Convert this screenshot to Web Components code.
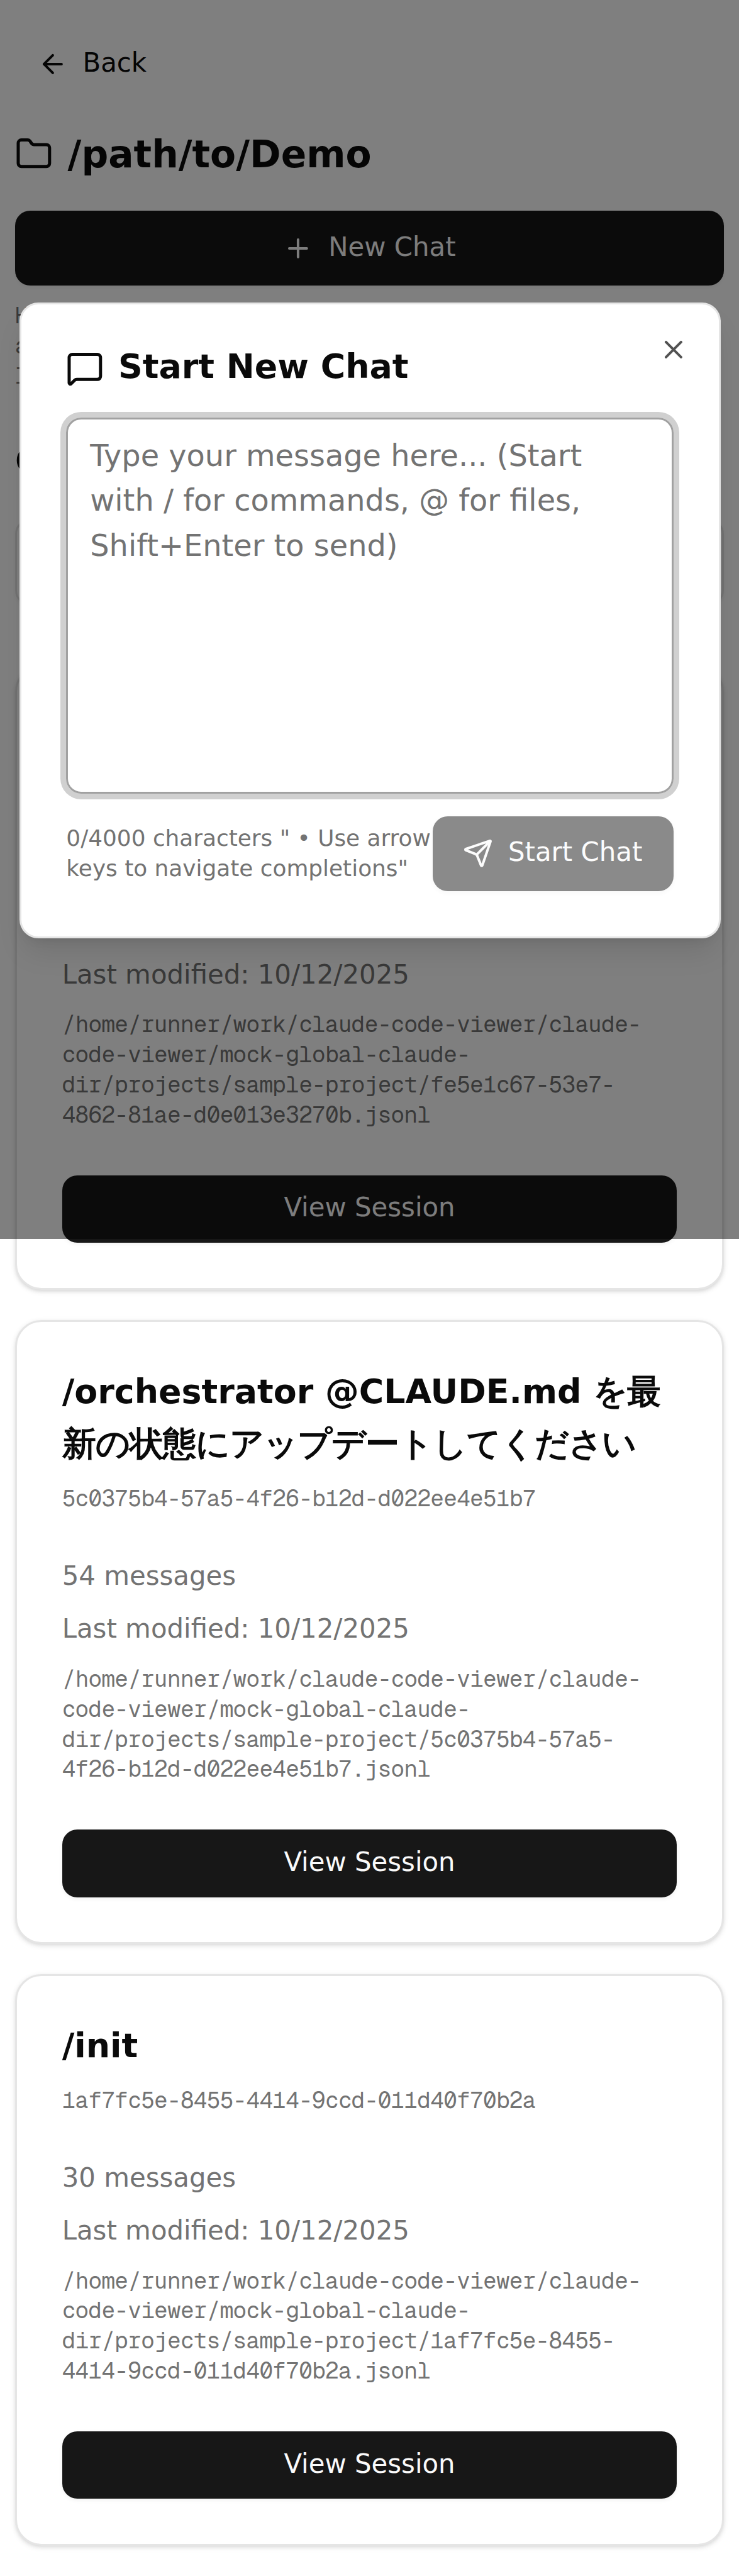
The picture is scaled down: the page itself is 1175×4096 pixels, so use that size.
<!DOCTYPE html>
<html lang="en">
<head>
<meta charset="utf-8">
<title>Claude Code Viewer</title>
<style>
/* 1rem is one layout unit of the 393-unit wide mobile viewport */
html { font-size: calc(1175px / 393); }
body {
  margin: 0; background: #fff; color: #0a0a0a; overflow: hidden;
  font-family: "DejaVu Sans", sans-serif;
  --mono: "Geist Mono", "Roboto Mono", "Liberation Mono", monospace;
  --muted: #737373; --border: #e5e5e5; --primary: #171717;
}
</style>
</head>
<body>
<project-page></project-page>
<script>
const define = (name, html) => {
  const t = document.createElement('template');
  t.innerHTML = html;
  customElements.define(name, class extends HTMLElement {
    constructor() {
      super();
      this.attachShadow({ mode: 'open' }).append(t.content.cloneNode(true));
    }
  });
};

const icons = {
  back: '<path d="m12 19-7-7 7-7"/><path d="M19 12H5"/>',
  folder: '<path d="M20 20a2 2 0 0 0 2-2V8a2 2 0 0 0-2-2h-7.9a2 2 0 0 1-1.69-.9L9.6 3.9A2 2 0 0 0 7.93 3H4a2 2 0 0 0-2 2v13a2 2 0 0 0 2 2Z"/>',
  plus: '<path d="M5 12h14"/><path d="M12 5v14"/>',
  close: '<path d="M18 6 6 18"/><path d="m6 6 12 12"/>',
  message: '<path d="M22 17a2 2 0 0 1-2 2H6.828a2 2 0 0 0-1.414.586l-2.202 2.202A.71.71 0 0 1 2 21.286V5a2 2 0 0 1 2-2h16a2 2 0 0 1 2 2z"/>',
  send: '<path d="M14.536 21.686a.5.5 0 0 0 .937-.024l6.5-19a.496.496 0 0 0-.635-.635l-19 6.5a.5.5 0 0 0-.024.937l7.93 3.18a2 2 0 0 1 1.112 1.11z"/><path d="m21.854 2.147-10.94 10.939"/>'
};
customElements.define('ui-icon', class extends HTMLElement {
  constructor() { super(); this.attachShadow({ mode: 'open' }); }
  connectedCallback() {
    this.shadowRoot.innerHTML = `<style>
      :host { display: block; flex: none; width: 16rem; height: 16rem; }
      :host([large]) { width: 20rem; height: 20rem; }
      svg { display: block; width: 100%; height: 100%; }
    </style><svg viewBox="0 0 24 24" fill="none" stroke="currentColor" stroke-width="2" stroke-linecap="round" stroke-linejoin="round">${icons[this.getAttribute('name')]}</svg>`;
  }
});

define('ui-button', `<style>
  :host { display: flex; align-items: center; justify-content: center; gap: 8rem; box-sizing: border-box;
    height: 36rem; padding: 0 16rem; border-radius: 8rem; background: var(--primary); color: #fafafa;
    font-size: 14rem; line-height: 20rem; white-space: nowrap; box-shadow: 0 1rem 2rem rgba(0,0,0,.05); }
  :host([tall]) { height: 40rem; }
  :host([disabled]) { opacity: .5; }
  :host([ghost]) { background: none; color: inherit; box-shadow: none; padding: 0 12rem; align-self: flex-start; }
  span { padding-bottom: 4px; }
</style><slot name="icon"></slot><span><slot></slot></span>`);

define('session-card', `<style>
  :host { display: flex; flex-direction: column; justify-content: flex-end; gap: 24rem; box-sizing: border-box;
    height: var(--h, auto); padding: calc(25rem - 3px) 24rem; border: 3px solid var(--border); border-radius: 14rem;
    background: #fff; box-shadow: 0 1rem 3rem rgba(0,0,0,.1), 0 1rem 2rem -1rem rgba(0,0,0,.1); }
  header { display: flex; flex-direction: column; gap: 6rem; }
  h3 { margin: -3px 0 3px; font-size: 18rem; line-height: 28rem; font-weight: bold; word-break: break-all; }
  h3 span { letter-spacing: -.36rem; }
  .id, .path { font-family: var(--mono); font-size: 12rem; line-height: 16rem; letter-spacing: -.2rem; color: var(--muted); }
  .body { display: flex; flex-direction: column; gap: 8rem; color: var(--muted); }
  .line { margin: -2px 0 2px; font-size: 14rem; line-height: 20rem; }
</style>
<header><h3></h3><div class="id"></div></header>
<div class="body"><div class="line count"></div><div class="line date"></div><div class="path"></div></div>
<ui-button>View Session</ui-button>`);
customElements.define('session-item', class extends HTMLElement {
  constructor() { super(); this.attachShadow({ mode: 'open' }); }
  connectedCallback() {
    this.shadowRoot.innerHTML = '<style>:host { display: block; }</style><session-card></session-card>';
    const card = this.shadowRoot.lastChild, root = card.shadowRoot;
    const { heading, count, uuid, height } = this.dataset;
    if (height) card.style.setProperty('--h', height);
    if (heading) {
      // Japanese runs are tracked slightly tighter than Latin ones
      root.querySelector('h3').innerHTML = heading.replace(/[\u3000-\u9fff]+/g, '<span>$&</span>');
      root.querySelector('.id').textContent = uuid;
      root.querySelector('.count').textContent = count + ' messages';
    } else {
      root.querySelector('header').remove();
      root.querySelector('.count').remove();
    }
    root.querySelector('.date').textContent = 'Last modified: 10/12/2025';
    root.querySelector('.path').textContent = '/home/runner/work/claude-code-viewer/claude-code-viewer/mock-global-claude-dir/projects/sample-project/' + uuid + '.jsonl';
  }
});

define('chat-dialog', `<style>
  :host { display: block; box-sizing: border-box; position: relative; width: 1115.3px; height: 338rem; padding: 24rem;
    border: 3px solid var(--border); border-radius: 10rem; background: #fff;
    box-shadow: 0 10rem 15rem -3rem rgba(0,0,0,.1), 0 4rem 6rem -4rem rgba(0,0,0,.1); }
  .close { position: absolute; right: 16rem; top: 16rem; opacity: .7; }
  .content { display: flex; flex-direction: column; }
  h2 { display: flex; align-items: center; gap: 8rem; height: 20rem; margin: 0 0 16rem; font-size: 18rem; line-height: 18rem; font-weight: bold; }
  h2 span { padding-bottom: 7px; margin-left: -1px; }
  .input { box-sizing: border-box; height: 200rem; padding: calc(8rem - 2px) 12rem 0 calc(12rem - 1px); border: 3px solid #a1a1a1; border-radius: 8rem;
    font-size: 16rem; line-height: 24rem; color: var(--muted); box-shadow: 0 0 0 3rem #d0d0d0; }
  footer { display: flex; align-items: center; justify-content: space-between; margin-top: 12rem; }
  footer ui-button { width: 128rem; justify-content: flex-start; }
  p { margin: 0; font-size: 12rem; line-height: 16rem; color: var(--muted); }
</style>
<ui-icon class="close" name="close"></ui-icon>
<div class="content">
  <h2><ui-icon large name="message"></ui-icon><span>Start New Chat</span></h2>
  <div class="input">Type your message here... (Start with / for commands, @ for files, Shift+Enter to send)</div>
  <footer><p>0/4000 characters " • Use arrow<br>keys to navigate completions"</p>
  <ui-button tall disabled><ui-icon slot="icon" name="send"></ui-icon>Start Chat</ui-button></footer>
</div>`);

define('modal-overlay', `<style>
  :host { display: flex; align-items: flex-start; position: absolute; left: 0; top: 0; box-sizing: border-box;
    width: 1175px; height: 659rem; padding: 161rem 0 0 30.6px; background: rgba(0,0,0,.5); }
</style><slot></slot>`);

define('project-page', `<style>
  :host { display: block; box-sizing: border-box; height: 4096px; padding: 16rem 8rem; }
  .top { display: flex; flex-direction: column; }
  h1 { display: flex; align-items: center; gap: 8rem; height: 28rem; margin: 16rem 0; font-size: 20rem; line-height: 28rem; font-weight: bold; }
  h1 span { padding-top: 2px; }
  .file { margin: 8rem 0 0; font-family: var(--mono); font-size: 12rem; line-height: 16rem; letter-spacing: -.2rem; color: var(--muted); word-break: break-all; }
  h2 { margin: calc(24rem - 3px) 0 calc(16rem + 3px); font-size: 18rem; line-height: 28rem; font-weight: bold; }
  .filter { box-sizing: border-box; height: 46rem; margin-bottom: 32rem; border: 3px solid var(--border); border-radius: 8rem; box-shadow: 0 1rem 2rem rgba(0,0,0,.05); }
  .list { display: flex; flex-direction: column; gap: 16rem; }
</style>
<div class="top">
  <ui-button ghost><ui-icon slot="icon" name="back"></ui-icon>Back</ui-button>
  <h1><ui-icon large name="folder"></ui-icon><span>/path/to/Demo</span></h1>
  <ui-button tall><ui-icon slot="icon" name="plus"></ui-icon>New Chat</ui-button>
  <p class="file">History File: /home/runner/work/claude-code-viewer/claude-code-viewer/mock-global-claude-dir/projects/sample-project</p>
  <h2>Conversations</h2>
  <div class="filter"></div>
</div>
<div class="list">
  <session-item data-height="332rem" data-uuid="fe5e1c67-53e7-4862-81ae-d0e013e3270b"></session-item>
  <session-item data-height="332rem" data-heading="/orchestrator @CLAUDE.md を最新の状態にアップデートしてください" data-count="54" data-uuid="5c0375b4-57a5-4f26-b12d-d022ee4e51b7"></session-item>
  <session-item data-height="304rem" data-heading="/init" data-count="30" data-uuid="1af7fc5e-8455-4414-9ccd-011d40f70b2a"></session-item>
</div>
<modal-overlay><chat-dialog></chat-dialog></modal-overlay>`);
</script>
</body>
</html>
